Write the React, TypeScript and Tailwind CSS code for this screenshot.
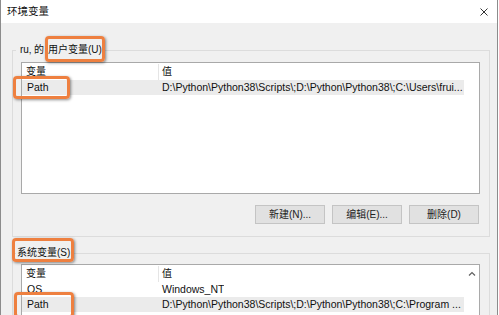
const rows1 = [
  { name: 'Path', value: 'D:\\Python\\Python38\\Scripts\\;D:\\Python\\Python38\\;C:\\Users\\frui...', selected: true },
];

const rows2 = [
  { name: 'OS', value: 'Windows_NT', selected: false },
  { name: 'Path', value: 'D:\\Python\\Python38\\Scripts\\;D:\\Python\\Python38\\;C:\\Program ...', selected: true },
];

type Row = { name: string; value: string; selected: boolean };

const VarList = ({ rows, scroll, className }: { rows: Row[]; scroll?: boolean; className: string }) => {
  return (
    <div className={`flex overflow-hidden border border-[#a9a9a9] bg-white ${className}`}>
      <div className="min-w-0 flex-1">
        <div className="flex h-[17px] items-center pt-px">
          <div className="w-[136px] shrink-0 pl-[4px]">变量</div>
          <div className="h-full w-px shrink-0 bg-[#e5e5e5]" />
          <div className="pl-[3px]">值</div>
        </div>
        {rows.map((row) => (
          <div
            key={row.name}
            className={`flex h-[15px] items-center text-[10.5px] ${row.selected ? 'bg-[#ebebeb]' : ''}`}
          >
            <div className="w-[136px] shrink-0 pl-[5px]">{row.name}</div>
            <div className="w-px shrink-0" />
            <div className="min-w-0 overflow-hidden whitespace-nowrap pl-[3px]">{row.value}</div>
          </div>
        ))}
      </div>
      <div className="flex w-[15px] shrink-0 justify-center pt-[6px]">
        {scroll && (
          <svg width="8" height="6" viewBox="0 0 8 6">
            <polyline points="1,4.5 4,1.5 7,4.5" fill="none" stroke="#606060" strokeWidth="1.2" />
          </svg>
        )}
      </div>
    </div>
  );
};

const Mark = ({ className }: { className: string }) => (
  <div
    className={`pointer-events-none absolute rounded-[4px] border-[3px] border-[#ee8040] shadow-[1px_1px_3px_rgba(0,0,0,0.45)] ${className}`}
  />
);

export default function App() {
  return (
    <div
      className="relative h-[315px] w-[499px] overflow-hidden bg-white text-[10px] leading-none text-[#111]"
      style={{ fontFamily: '"Liberation Sans", "Noto Sans CJK SC", sans-serif' }}
    >
      <div className="h-full w-[498px] border-x border-[#8c8c8c] bg-[#f0f0f0]">
        <div className="flex h-[23px] items-center justify-between bg-white pl-[6px] pr-[9px] text-[10.5px]">
          <span>环境变量</span>
          <svg width="8" height="8" viewBox="0 0 8 8">
            <path d="M0.5 0.5 L7.5 7.5 M7.5 0.5 L0.5 7.5" stroke="#333" strokeWidth="1" />
          </svg>
        </div>

        <fieldset className="ml-[11px] mt-[19px] w-[478px] border border-[#dcdcdc] pb-[12px] pl-[8px] pr-[9px] pt-[4px]">
          <legend className="-ml-[5px] h-[16px] px-[1px] leading-[16px]">
            <span className="inline-block w-[31px] pl-[3px]">ru‚ 的</span>用户变量(U)
          </legend>
          <VarList rows={rows1} className="h-[132px]" />
          <div className="mt-[11px] flex justify-end gap-[7px] pr-px">
            {['新建(N)...', '编辑(E)...', '删除(D)'].map((label) => (
              <button
                key={label}
                className="h-[19px] w-[70px] border border-[#c4c4c4] bg-[#e1e1e1] text-[10px] text-[#222]"
              >
                {label}
              </button>
            ))}
          </div>
        </fieldset>

        <fieldset className="ml-[11px] mt-[8px] w-[478px] border border-[#dcdcdc] pl-[8px] pr-[9px] pt-[3px]">
          <legend className="-ml-[5px] h-[16px] px-[1px] leading-[16px]">系统变量(S)</legend>
          <VarList rows={rows2} scroll className="h-[80px]" />
        </fieldset>
      </div>

      <Mark className="left-[45px] top-[36px] h-[26px] w-[60px]" />
      <Mark className="left-[13px] top-[76px] h-[23px] w-[57px]" />
      <Mark className="left-[12px] top-[238px] h-[24px] w-[62px]" />
      <Mark className="left-[14px] top-[292px] h-[26px] w-[60px]" />
    </div>
  );
}
